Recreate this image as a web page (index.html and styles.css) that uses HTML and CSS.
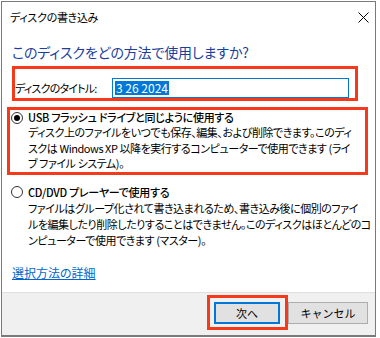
FILE: index.html
```html
<!DOCTYPE html>
<html lang="ja">
<head>
    <meta charset="UTF-8">
    <title>ディスクの書き込み</title>
    <link rel="stylesheet" href="styles.css">
</head>
<body>
    <div class="window">
        <div class="titlebar">
            <span class="title">ディスクの書き込み</span>
            <svg class="close" width="11" height="11" viewBox="0 0 11 11">
                <path d="M0.5 0.5 L10.5 10.5 M10.5 0.5 L0.5 10.5" stroke="#000" stroke-width="1" fill="none"/>
            </svg>
        </div>
        <div class="content">
            <div class="heading">このディスクをどの方法で使用しますか?</div>
            <div class="mark name-box">
                <span class="label">ディスクのタイトル:</span>
                <div class="input"><span class="selected">3 26 2024</span></div>
            </div>
            <div class="mark option option-usb">
                <div class="option-title">
                    <span class="radio checked"></span>
                    <span>USB フラッシュ ドライブと同じように使用する</span>
                </div>
                <div class="option-desc">ディスク上のファイルをいつでも保存、編集、および削除できます。このディ<br>スクは Windows XP 以降を実行するコンピューターで使用できます (ライ<br>ブ ファイル システム)。</div>
            </div>
            <div class="option option-cd">
                <div class="option-title">
                    <span class="radio"></span>
                    <span>CD/DVD プレーヤーで使用する</span>
                </div>
                <div class="option-desc">ファイルはグループ化されて書き込まれるため、書き込み後に個別のファイ<br>ルを編集したり削除したりすることはできません。このディスクはほとんどのコ<br>ンピューターで使用できます (マスター)。</div>
            </div>
            <a class="link" href="#">選択方法の詳細</a>
        </div>
        <div class="footer">
            <div class="mark next-box">
                <button class="button default">次へ</button>
            </div>
            <button class="button cancel">キャンセル</button>
        </div>
    </div>
</body>
</html>
```

FILE: styles.css
```css
body {
    margin: 0;
    background-color: #ffffff;
    font-family: 'Noto Sans CJK JP', sans-serif;
    font-size: 11px;
    color: #000000;
    font-feature-settings: "palt";
    overflow: hidden;
}
.window {
    margin: 1px 0 0 1px;
    width: 375px;
    height: 336px;
    box-sizing: border-box;
    border: 1px solid #7a7a7a;
    border-bottom-width: 2px;
    display: flex;
    flex-direction: column;
    background-color: #ffffff;
}
.titlebar {
    height: 29px;
    display: flex;
    align-items: center;
    justify-content: space-between;
    padding: 0 6px 0 8px;
}
.title {
    font-size: 11px;
    letter-spacing: -0.3px;
}
.close {
    margin-top: 2px;
}
.content {
    flex: 1;
    padding-left: 10px;
    display: flex;
    flex-direction: column;
    align-items: flex-start;
}
.heading {
    margin-top: 11px;
    font-size: 14px;
    line-height: 20px;
    color: #1a3f9e;
    letter-spacing: -0.15px;
}
.mark {
    border: 3px solid #f5391b;
}
.name-box {
    margin-top: 4px;
    width: 340px;
    padding-top: 9px;
    display: flex;
    align-items: center;
}
.label {
    width: 97px;
    letter-spacing: -0.8px;
}
.input {
    width: 237px;
    height: 20px;
    box-sizing: border-box;
    border: 1px solid #0078d7;
    display: flex;
    align-items: center;
    padding-left: 2px;
    font-size: 12px;
}
.selected {
    background-color: #0078d7;
    color: #ffffff;
    line-height: 14px;
    padding: 0 1px;
}
.option {
    line-height: 15px;
}
.option-usb {
    margin-top: 6px;
    margin-left: -5px;
    width: 355px;
}
.option-cd {
    margin-top: 10px;
    margin-left: -2px;
}
.option-title {
    display: flex;
    align-items: center;
    gap: 5px;
    padding-left: 1px;
    font-weight: 500;
    letter-spacing: -0.3px;
}
.radio {
    flex-shrink: 0;
    width: 12px;
    height: 12px;
    box-sizing: border-box;
    border: 1px solid #333333;
    border-radius: 50%;
    display: flex;
    align-items: center;
    justify-content: center;
}
.radio.checked::after {
    content: "";
    width: 6px;
    height: 6px;
    border-radius: 50%;
    background-color: #000000;
}
.option-desc {
    padding-left: 18px;
    line-height: 15.5px;
    white-space: nowrap;
    letter-spacing: -0.45px;
}
.option-cd .option-desc {
    line-height: 16px;
}
.link {
    margin-top: 17px;
    color: #0066cc;
    line-height: 16px;
    font-size: 12px;
}
.footer {
    height: 40px;
    background-color: #f0f0f0;
    border-top: 1px solid #dfdfdf;
    display: flex;
    justify-content: flex-end;
    align-items: flex-start;
    padding: 2px 7px 0 0;
}
.next-box {
    padding: 4px 5px 3px 4px;
}
.button {
    font-family: 'Noto Sans CJK JP', sans-serif;
    font-size: 11px;
    height: 22px;
    background-color: #e1e1e1;
    border: 1px solid #adadad;
    padding: 0;
    color: #000000;
}
.default {
    width: 66px;
    border: 2px solid #0078d7;
}
.cancel {
    width: 80px;
    margin-top: 7px;
}
```
